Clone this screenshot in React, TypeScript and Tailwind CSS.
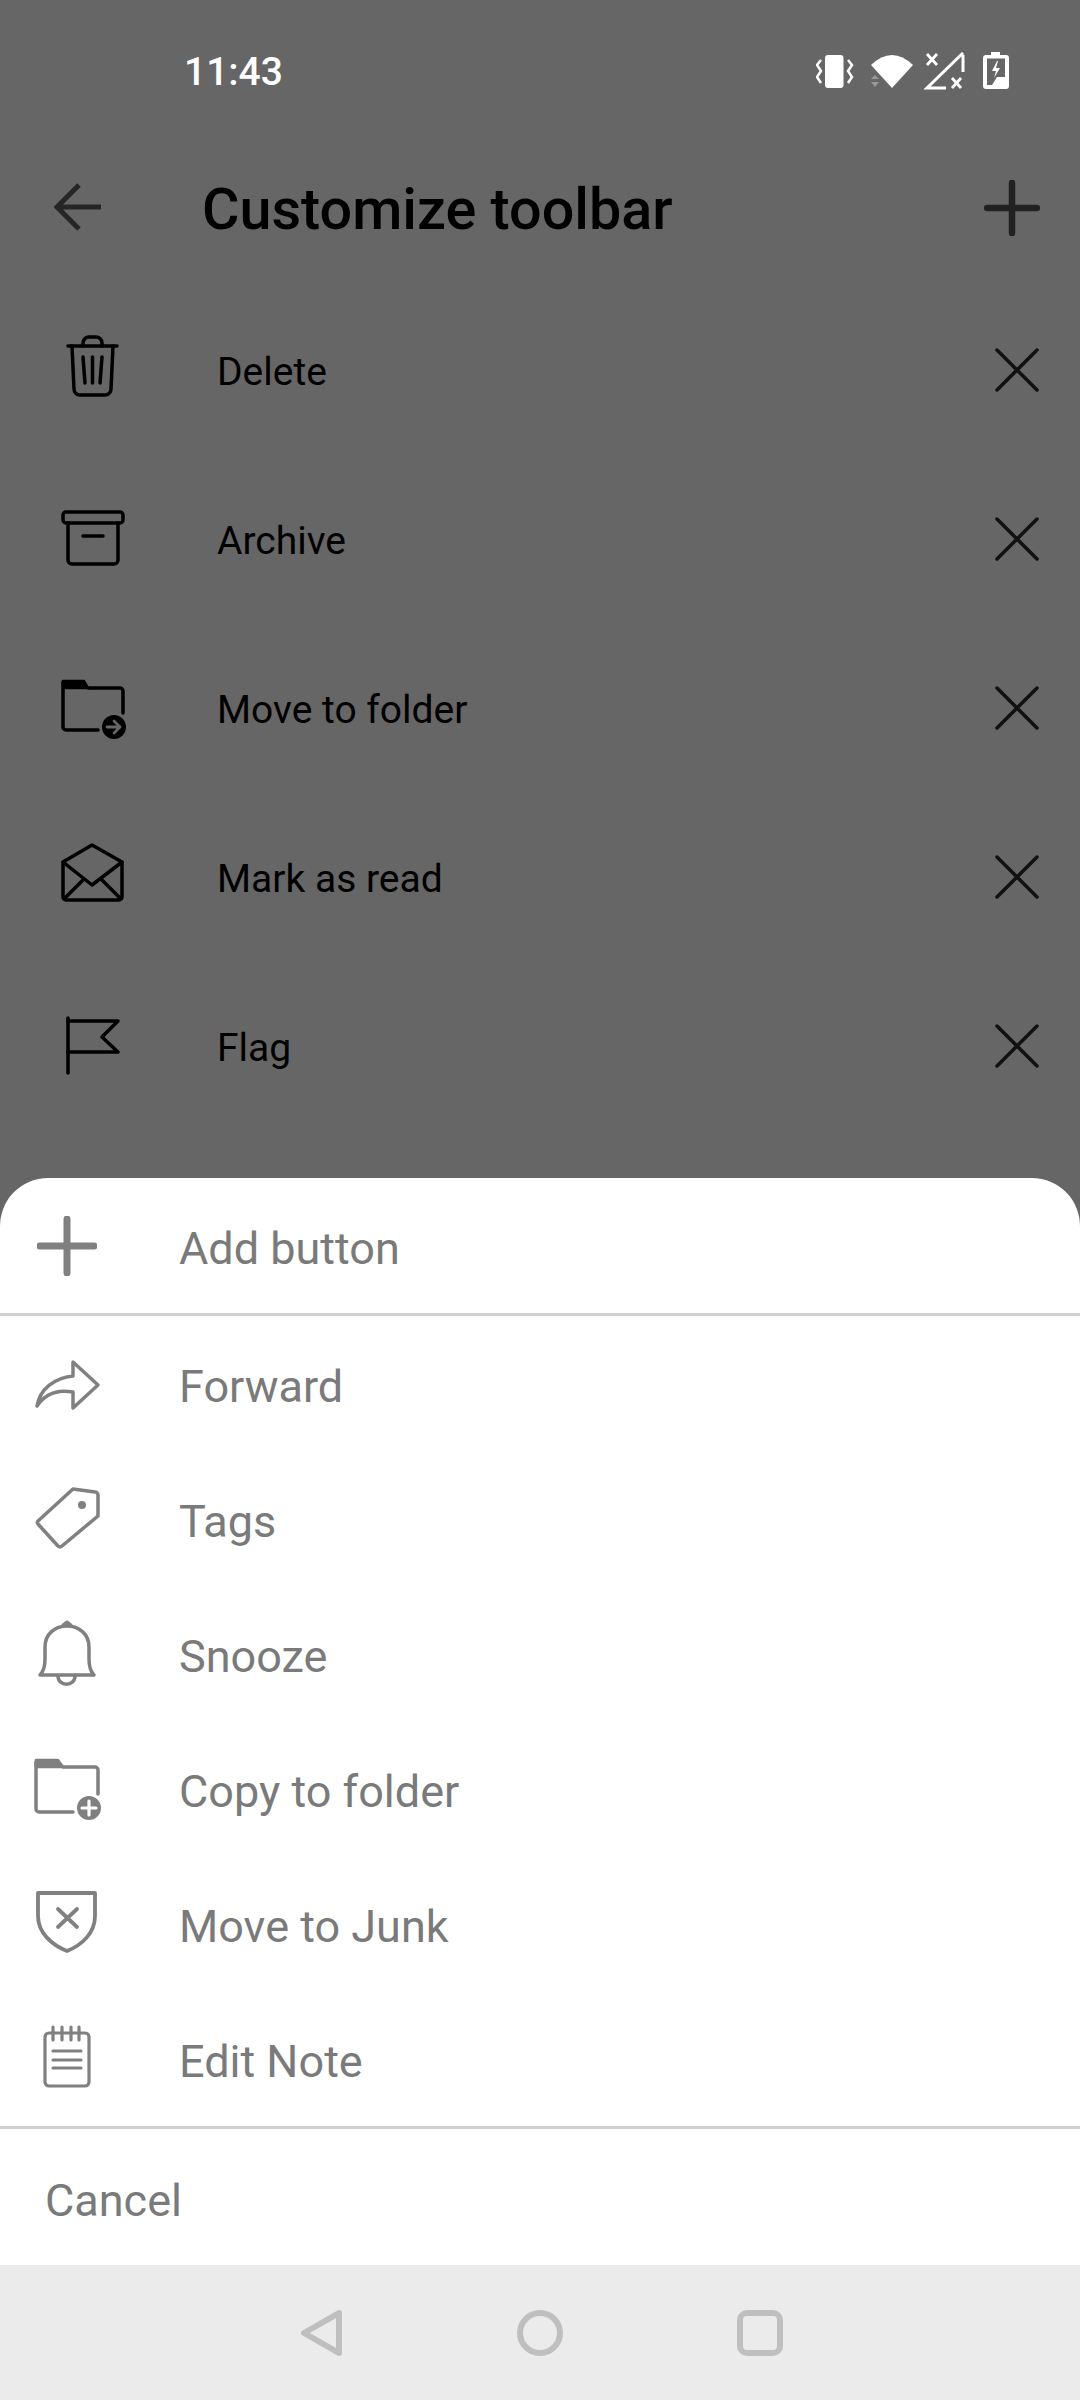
import type { ReactNode } from "react";

const SANS = "font-['Roboto','Liberation_Sans',sans-serif]";

function Svg({ children, className }: { children: ReactNode; className?: string }) {
  return (
    <svg width={72} height={72} viewBox="0 0 72 72" fill="none" stroke="currentColor" strokeLinecap="round" strokeLinejoin="round" className={className}>
      {children}
    </svg>
  );
}

// all list icons are drawn in a 72x72 box
const DeleteIcon = (
  <Svg className="text-black">
    <g strokeWidth={3.5}>
      <path d="M11 12H60" />
      <path d="M26 12V9a6 6 0 0 1 6-6h7a6 6 0 0 1 6 6v3" />
      <path d="M15 12l2 43a6 6 0 0 0 6 6h25a6 6 0 0 0 6-6l2-43" />
      <path d="M26 23l2 26M35.500 23v26M45 23l-2 26" />
    </g>
  </Svg>
);

const ArchiveIcon = (
  <Svg className="text-black">
    <g strokeWidth={3.5}>
      <rect x={6} y={9} width={60} height={11} rx={3} />
      <path d="M11 20V57a4 4 0 0 0 4 4H57a4 4 0 0 0 4-4V20" />
      <path d="M26 33H46" />
    </g>
  </Svg>
);

const MoveFolderIcon = (
  <Svg className="text-black">
    <path d="M6 9H27l4 7H6z" fill="currentColor" strokeWidth={2.500} />
    <path d="M41 58H9a3 3 0 0 1-3-3V10M31 16H63a3 3 0 0 1 3 3V41" strokeWidth={3.5} />
    <circle cx={57} cy={55} r={11} fill="currentColor" strokeWidth={2} />
    <path d="M50 55H63M57 49l6 6-6 6" stroke="#666666" strokeWidth={2.800} />
  </Svg>
);

const MailIcon = (
  <Svg className="text-black">
    <g strokeWidth={3.5}>
      <path d="M6 21L35 4L65 21V56a3 3 0 0 1-3 3H9a3 3 0 0 1-3-3z" />
      <path d="M6 21L35 44L65 21" />
      <path d="M26 39L8 57M45 39L63 57" />
    </g>
  </Svg>
);

const FlagIcon = (
  <Svg className="text-black">
    <g strokeWidth={3.5}>
      <path d="M11 8V63" />
      <path d="M11 11H61L45 27L61 42H11" />
    </g>
  </Svg>
);

const ForwardIcon = (
  <Svg>
    <path d="M41 14L66 37L41 60V44C25 41 13 46 5 58C8 41 22 30 41 28Z" strokeWidth={3.500} />
  </Svg>
);

const TagIcon = (
  <Svg>
    <path d="M41 6L63 9a3 3 0 0 1 3 3V33L30 63a3 3 0 0 1-4 0L6 41a2 2 0 0 1 0-3Z" strokeWidth={3.500} />
    <circle cx={50} cy={22} r={4} fill="currentColor" stroke="none" />
  </Svg>
);

const BellIcon = (
  <Svg>
    <path d="M8 57c4-4 5-10 5-16V29C13 16 23 8 35 8S57 16 57 29V41c0 6 1 12 5 16z" strokeWidth={3.500} />
    <path d="M31 7L35 4L39 7Z" fill="currentColor" strokeWidth={3} />
    <path d="M26 58c0 11 17 11 17 0" strokeWidth={3.500} />
  </Svg>
);

const CopyFolderIcon = (
  <Svg>
    <path d="M4 7H26l5 7H4z" fill="currentColor" strokeWidth={2.500} />
    <path d="M41 59H7a3 3 0 0 1-3-3V9M31 14H63a3 3 0 0 1 3 3V41" strokeWidth={3.500} />
    <circle cx={57} cy={55} r={11} fill="currentColor" strokeWidth={2} />
    <path d="M50 55H64M57 48V62" stroke="#ffffff" strokeWidth={3.2} />
  </Svg>
);

const ShieldIcon = (
  <Svg>
    <path d="M6 5H63V28C63 45 50 57 35 63C20 57 6 45 6 28Z" strokeWidth={3.8} />
    <path d="M26 21L45 39M45 21L26 39" strokeWidth={3.8} />
  </Svg>
);

const NoteIcon = (
  <Svg>
    <g strokeWidth={3.200}>
      <rect x={13} y={10} width={44} height={53} rx={4} />
      <path d="M21 4V17M30 4V17M39 4V17M47 4V17" />
      <path d="M21 28H49M21 37H49M21 45H49" />
    </g>
  </Svg>
);

const topRows = [
  { label: "Delete", icon: DeleteIcon },
  { label: "Archive", icon: ArchiveIcon },
  { label: "Move to folder", icon: MoveFolderIcon },
  { label: "Mark as read", icon: MailIcon },
  { label: "Flag", icon: FlagIcon },
];

const sheetRows = [
  { label: "Forward", icon: ForwardIcon },
  { label: "Tags", icon: TagIcon },
  { label: "Snooze", icon: BellIcon },
  { label: "Copy to folder", icon: CopyFolderIcon },
  { label: "Move to Junk", icon: ShieldIcon },
  { label: "Edit Note", icon: NoteIcon },
];

function StatusIcons() {
  return (
    <svg width={194} height={38} viewBox="0 0 194 38" fill="white" className="block">
      {/* vibrate */}
      <rect x={9} y={3} width={18.500} height={33} rx={3} />
      <path d="M5 8L1 13L5 19L1 25L5 31M32 8L36 13L32 19L36 25L32 31" fill="none" stroke="white" strokeWidth={2.500} />
      {/* wifi */}
      <path d="M55 13Q76-7 97 13L76 36Z" />
      <path d="M55 27l4-4 4 4zM55 30h8l-4 5z" fill="#999999" />
      {/* signal, no sim */}
      <path d="M147 3V20M147 1L111 36H130" fill="none" stroke="white" strokeWidth={3} />
      <path d="M111 2l10 11M121 2l-10 11M136 26l9 10M145 26l-9 10" fill="none" stroke="white" strokeWidth={2.800} />
      {/* battery */}
      <path d="M175 0h9v3h6a3 3 0 0 1 3 3v28a3 3 0 0 1-3 3h-20a3 3 0 0 1-3-3V6a3 3 0 0 1 3-3h5z" />
      <path d="M171 6.500h18V25h-8l-5 8h-5z" fill="#666666" />
      <path d="M181 9l-5 10h4l-2 7 6-10h-4l2-7z" />
    </svg>
  );
}

export default function App() {
  return (
    <div className={`w-[1080px] h-[2400px] bg-[#666666] flex flex-col overflow-hidden ${SANS}`}>
      {/* status bar */}
      <div className="h-[142px] shrink-0 flex items-center justify-between pl-[184px] pr-[70px]">
        <span className="text-white text-[39px] font-medium leading-none pt-[3px]">11:43</span>
        <StatusIcons />
      </div>

      {/* toolbar */}
      <div className="h-[132px] shrink-0 flex items-center pl-[54px] pr-[40px]">
        <svg width={48} height={48} viewBox="0 0 48 48" fill="none" stroke="#262626" strokeWidth={5} className="shrink-0 -mt-[3px]">
          <path d="M3 24H47M25 2L3 24L25 46" />
        </svg>
        <h1 className="ml-[100px] text-[57.5px] font-medium text-black leading-none flex-1 pt-[3px]">Customize toolbar</h1>
        <svg width={56} height={56} viewBox="0 0 56 56" fill="none" stroke="#222222" className="shrink-0">
          <path d="M28 3V53M3 28H53" strokeWidth={6.500} strokeLinecap="round" />
        </svg>
      </div>

      {/* active buttons */}
      <div className="flex flex-col mt-[11px]">
        {topRows.map((r) => (
          <div key={r.label} className="h-[169px] flex items-center pl-[57px] pr-[39px]">
            <div className="w-[72px] h-[72px] shrink-0">{r.icon}</div>
            <span className="ml-[88px] flex-1 text-[39px] text-black leading-none pt-[6px]">{r.label}</span>
            <svg width={48} height={48} viewBox="0 0 48 48" fill="none" stroke="#111111" strokeWidth={3.500} strokeLinecap="round" className="shrink-0">
              <path d="M4 4L44 44M44 4L4 44" />
            </svg>
          </div>
        ))}
      </div>

      {/* add button sheet */}
      <div className="mt-auto bg-white rounded-t-[48px] h-[1222px] shrink-0 flex flex-col">
        <div className="h-[138px] shrink-0 flex items-center pl-[37px] border-b-[3px] border-[#d0d0d0]">
          <svg width={60} height={60} viewBox="0 0 60 60" fill="none" stroke="#808080" className="shrink-0">
            <path d="M30 3V57M3 30H57" strokeWidth={7} strokeLinecap="round" />
          </svg>
          <span className="ml-[82px] text-[45px] leading-none text-[#7a7a7a] pt-[6px]">Add button</span>
        </div>
        <div className="flex flex-col">
          {sheetRows.map((r) => (
            <div key={r.label} className="h-[135px] flex items-center pl-[32px]">
              <div className="w-[72px] h-[72px] shrink-0 text-[#808080]">{r.icon}</div>
              <span className="ml-[75px] text-[45px] leading-none text-[#7a7a7a] pt-[6px]">{r.label}</span>
            </div>
          ))}
        </div>
        <div className="h-[139px] shrink-0 flex items-center pl-[45px] border-t-[3px] border-[#d0d0d0]">
          <span className="text-[45px] leading-none text-[#7a7a7a] pt-[6px]">Cancel</span>
        </div>
        <div className="flex-1 bg-[#ebebeb] flex items-center justify-center gap-[172px] pl-[2px]">
          <svg width={46} height={46} viewBox="0 0 46 46" fill="none" stroke="#bfbfbf" strokeWidth={6} strokeLinejoin="round">
            <path d="M40 3V43L5 23Z" />
          </svg>
          <svg width={46} height={46} viewBox="0 0 46 46" fill="none" stroke="#bfbfbf" strokeWidth={6}>
            <circle cx={23} cy={23} r={20} />
          </svg>
          <svg width={46} height={46} viewBox="0 0 46 46" fill="none" stroke="#bfbfbf" strokeWidth={6} className="ml-[2px]">
            <rect x={3} y={3} width={40} height={40} rx={7} />
          </svg>
        </div>
      </div>
    </div>
  );
}
